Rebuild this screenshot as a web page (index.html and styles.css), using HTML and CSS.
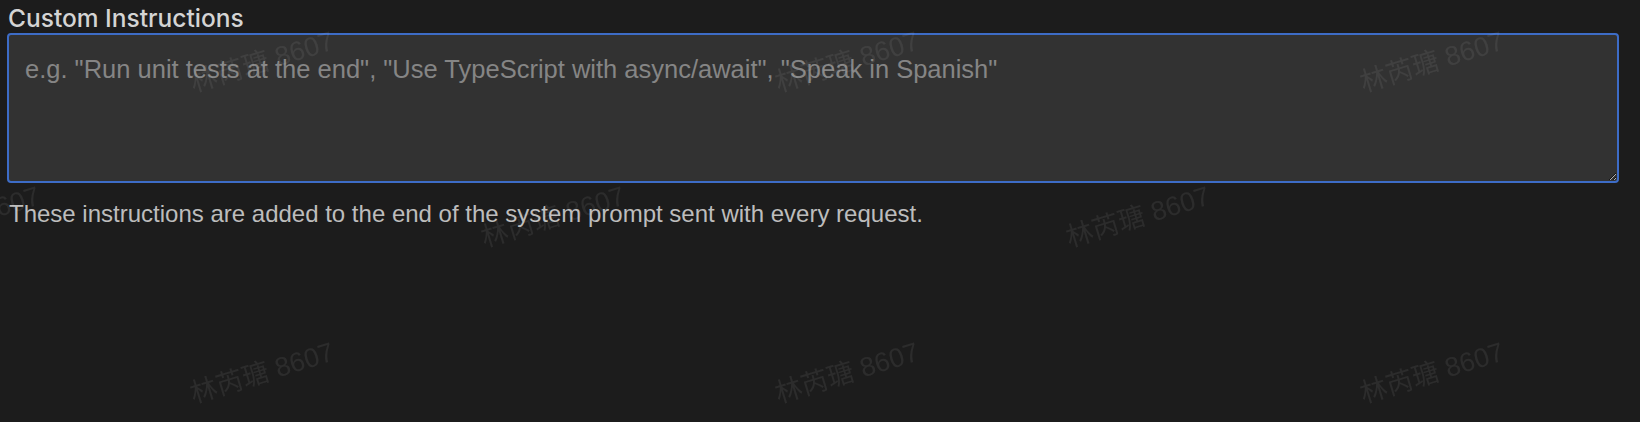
FILE: index.html
```html
<!DOCTYPE html>
<html lang="en">
<head>
<meta charset="utf-8">
<title>Custom Instructions</title>
<link rel="stylesheet" href="styles.css">
</head>
<body>
<div class="setting">
  <label class="setting-label" for="ci">Custom Instructions</label>
  <textarea id="ci" class="setting-input" placeholder="e.g. &quot;Run unit tests at the end&quot;, &quot;Use TypeScript with async/await&quot;, &quot;Speak in Spanish&quot;"></textarea>
  <p class="setting-desc">These instructions are added to the end of the system prompt sent with every request.</p>
</div>
<div class="watermarks" aria-hidden="true">
  <span class="wm wm-r1 wm-c1">林芮瑭 8607</span>
  <span class="wm wm-r1 wm-c2">林芮瑭 8607</span>
  <span class="wm wm-r1 wm-c3">林芮瑭 8607</span>
  <span class="wm wm-r2 wm-c0">林芮瑭 8607</span>
  <span class="wm wm-r2 wm-c15">林芮瑭 8607</span>
  <span class="wm wm-r2 wm-c25">林芮瑭 8607</span>
  <span class="wm wm-r3 wm-c1">林芮瑭 8607</span>
  <span class="wm wm-r3 wm-c2">林芮瑭 8607</span>
  <span class="wm wm-r3 wm-c3">林芮瑭 8607</span>
</div>
</body>
</html>
```
FILE: styles.css
```css
html, body {
  margin: 0;
  padding: 0;
  background: #1c1c1c;
  height: 100%;
  overflow: hidden;
}
body {
  font-family: "Liberation Sans", Arial, sans-serif;
  color: #cccccc;
}
.setting {
  display: flex;
  flex-direction: column;
  align-items: flex-start;
  padding: 4px 21px 0 7px;
}
.setting-label {
  font-family: Inter, "Liberation Sans", sans-serif;
  font-weight: 500;
  font-size: 24.5px;
  line-height: 28px;
  color: #d4d4d4;
  padding-left: 1px;
}
.setting-input {
  box-sizing: border-box;
  width: 1612px;
  height: 150px;
  margin: 1px 0 0 0;
  border: 2px solid #3d6cc6;
  border-radius: 4px;
  background: #323232;
  color: #cccccc;
  color-scheme: dark;
  font-family: "Liberation Sans", Arial, sans-serif;
  font-size: 25.5px;
  line-height: 32px;
  padding: 18px 16px;
  outline: none;
  resize: vertical;
}
.setting-input::placeholder {
  color: #858585;
  opacity: 1;
}
.setting-desc {
  margin: 17px 0 0 0;
  font-size: 24px;
  line-height: 28px;
  color: #bdbdbd;
  padding-left: 2px;
}
.watermarks {
  position: fixed;
  inset: 0;
  overflow: hidden;
  pointer-events: none;
}
.wm {
  position: absolute;
  width: 170px;
  height: 32px;
  line-height: 32px;
  text-align: center;
  white-space: nowrap;
  font-family: "Liberation Sans", "Noto Sans CJK SC", sans-serif;
  font-size: 27px;
  color: rgba(255, 255, 255, 0.07);
  transform: rotate(-17deg);
}
.wm-r1 { top: 46px; }
.wm-r2 { top: 201px; }
.wm-r3 { top: 357px; }
.wm-c1 { left: 177px; }
.wm-c2 { left: 762px; }
.wm-c3 { left: 1347px; }
.wm-c0 { left: -117px; }
.wm-c15 { left: 468px; }
.wm-c25 { left: 1053px; }
```
